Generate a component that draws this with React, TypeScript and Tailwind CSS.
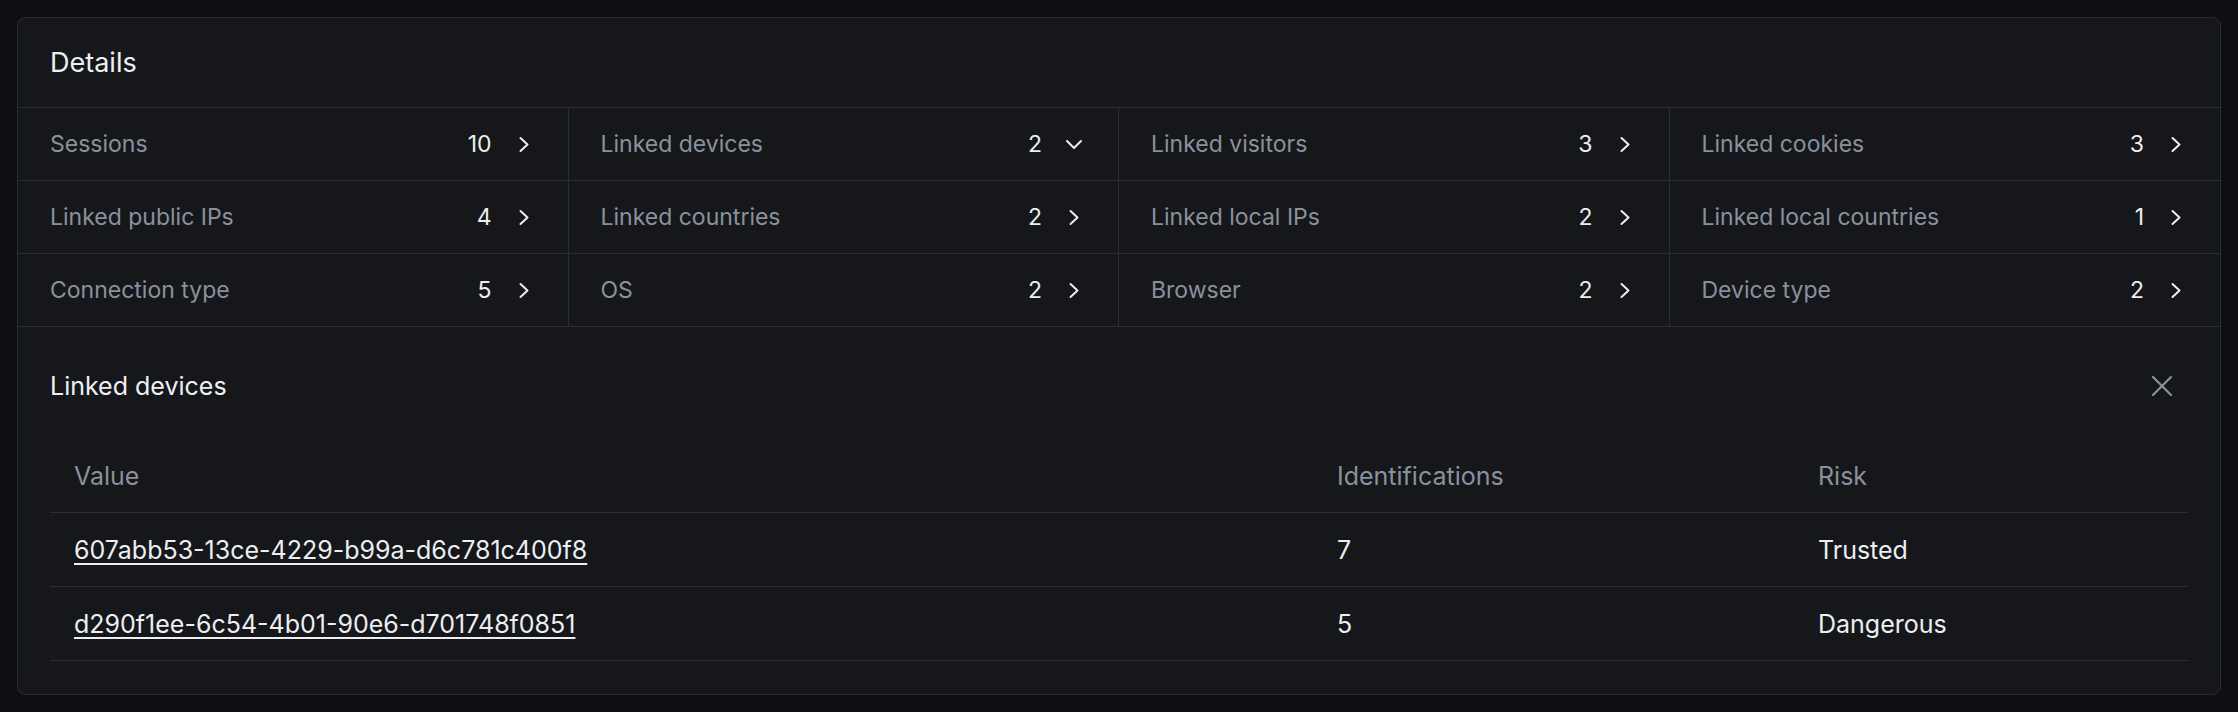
import { ReactNode } from 'react'

type Stat = {
  label: string
  count: number
  open?: boolean
}

const stats: Stat[] = [
  { label: 'Sessions', count: 10 },
  { label: 'Linked devices', count: 2, open: true },
  { label: 'Linked visitors', count: 3 },
  { label: 'Linked cookies', count: 3 },
  { label: 'Linked public IPs', count: 4 },
  { label: 'Linked countries', count: 2 },
  { label: 'Linked local IPs', count: 2 },
  { label: 'Linked local countries', count: 1 },
  { label: 'Connection type', count: 5 },
  { label: 'OS', count: 2 },
  { label: 'Browser', count: 2 },
  { label: 'Device type', count: 2 },
]

const devices = [
  { id: '607abb53-13ce-4229-b99a-d6c781c400f8', identifications: 7, risk: 'Trusted' },
  { id: 'd290f1ee-6c54-4b01-90e6-d701748f0851', identifications: 5, risk: 'Dangerous' },
]

const ChevronRight = () => (
  <svg width="24" height="24" viewBox="0 0 24 24" fill="none" stroke="currentColor" strokeWidth="2" strokeLinecap="round" strokeLinejoin="round">
    <path d="M8.5 6 15.5 12.5 8.5 19" />
  </svg>
)

const ChevronDown = () => (
  <svg width="24" height="24" viewBox="0 0 24 24" fill="none" stroke="currentColor" strokeWidth="2" strokeLinecap="round" strokeLinejoin="round">
    <path d="M5 9 12 16 19 9" />
  </svg>
)

const CloseIcon = () => (
  <svg width="22" height="22" viewBox="0 0 22 22" fill="none" stroke="currentColor" strokeWidth="2.2" strokeLinecap="round">
    <path d="M2 2 20 20M20 2 2 20" />
  </svg>
)

const StatCell = ({ stat, last }: { stat: Stat; last: boolean }) => (
  <button
    className={`flex h-[73px] items-center justify-between border-b border-[#2a2d33] pl-8 pr-8 text-left ${
      last ? '' : 'border-r'
    }`}
  >
    <span className="text-[23px] text-[#8a919d]">{stat.label}</span>
    <span className="flex items-center gap-5">
      <span className="text-[23px] text-[#eceef1]">{stat.count}</span>
      <span className="text-[#eceef1]">{stat.open ? <ChevronDown /> : <ChevronRight />}</span>
    </span>
  </button>
)

const Cell = ({ children }: { children: ReactNode }) => (
  <div className="flex items-center px-6 pt-[3px]">{children}</div>
)

export default function App() {
  return (
    <div className="min-h-screen bg-[#0e0f12] p-[17px] [font-family:Inter,sans-serif]">
      <div className="overflow-hidden rounded-[9px] border border-[#2a2d33] bg-[#15171b]">
        <div className="flex h-[90px] items-center border-b border-[#2a2d33] px-8 pt-[2px]">
          <h2 className="text-[27px] text-[#eef0f2]">Details</h2>
        </div>

        <div className="grid grid-cols-4">
          {stats.map((stat, i) => (
            <StatCell key={stat.label} stat={stat} last={i % 4 === 3} />
          ))}
        </div>

        <div className="px-8 pt-[28px] pb-[33px]">
          <div className="flex h-[62px] items-center justify-between">
            <h3 className="pt-[2px] text-[25px] text-[#eef0f2]">Linked devices</h3>
            <button className="flex h-[52px] w-[52px] items-center justify-center text-[#8a919d]">
              <CloseIcon />
            </button>
          </div>

          <div className="mt-[21px] text-[25px]">
            <div className="grid h-[75px] grid-cols-[1263px_481px_1fr] border-b border-[#2a2d33] text-[#8a919d]">
              <Cell>Value</Cell>
              <Cell>Identifications</Cell>
              <Cell>Risk</Cell>
            </div>
            {devices.map((device) => (
              <div
                key={device.id}
                className="grid h-[74px] grid-cols-[1263px_481px_1fr] border-b border-[#2a2d33] text-[#eceef1]"
              >
                <Cell>
                  <a href="#" className="underline decoration-[1.5px] underline-offset-[4px]">
                    {device.id}
                  </a>
                </Cell>
                <Cell>{device.identifications}</Cell>
                <Cell>{device.risk}</Cell>
              </div>
            ))}
          </div>
        </div>
      </div>
    </div>
  )
}
